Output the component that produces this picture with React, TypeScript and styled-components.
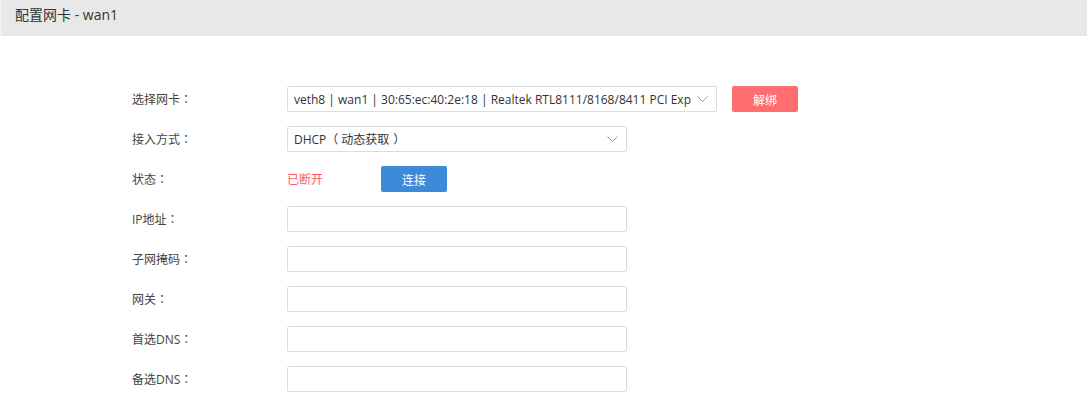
import React from "react";
import styled, { createGlobalStyle } from "styled-components";

const Global = createGlobalStyle`
  html, body { margin: 0; padding: 0; background: #fff; }
  body { font-family: "Open Sans", "Noto Sans CJK SC", sans-serif; color: #333; }
  * { box-sizing: border-box; }
`;

const Header = styled.div`
  height: 36px;
  background: #e8e8e8;
  border-left: 1px solid #f4f4f4;
  padding-left: 14px;
  font-size: 14px;
  line-height: 29px;
  color: #333;
`;

const Form = styled.div`
  margin-top: 43px;
  padding-left: 132px;
  display: flex;
  flex-direction: column;
`;

const Row = styled.div`
  height: 40px;
  display: flex;
  align-items: center;
`;

const Label = styled.div`
  width: 155px;
  font-size: 12px;
  color: #444;
`;

const Punct = styled.span`
  font-family: "Noto Sans CJK TC", sans-serif;
`;

const Paren = styled.span<{ $open?: boolean }>`
  display: inline-block;
  width: 12px;
  margin-left: ${(p) => (p.$open ? "0" : "4px")};
  margin-right: ${(p) => (p.$open ? "3px" : "0")};
  font-family: "Noto Sans CJK TC", sans-serif;
`;

const SelectBox = styled.div<{ $w: number }>`
  width: ${(p) => p.$w}px;
  height: 26px;
  border: 1px solid #dcdcdc;
  border-radius: 2px;
  display: flex;
  align-items: center;
  padding: 0 8px 0 6px;
  font-size: 12px;
  color: #333;
  background: #fff;
  white-space: nowrap;
  overflow: hidden;
`;

const SelectText = styled.span`
  flex: 1;
  overflow: hidden;
`;

const Input = styled.div`
  width: 340px;
  height: 26px;
  border: 1px solid #dcdcdc;
  border-radius: 2px;
  background: #fff;
`;

const Button = styled.button<{ $color: string }>`
  width: 66px;
  height: 26px;
  border: none;
  border-radius: 2px;
  background: ${(p) => p.$color};
  color: #fff;
  font-family: "Noto Sans CJK SC", sans-serif;
  font-size: 12px;
  padding: 0;
  cursor: pointer;
`;

const Status = styled.span`
  width: 94px;
  font-size: 12px;
  color: #ff5a5f;
`;

const Gap = styled.div`
  width: 15px;
`;

const Chevron = () => (
  <svg width="11" height="6" viewBox="0 0 11 6" style={{ flexShrink: 0 }}>
    <path d="M0.5 0.5 L5.5 5.5 L10.5 0.5" fill="none" stroke="#999" strokeWidth="1" />
  </svg>
);

const L = ({ t }: { t: string }) => (
  <Label>
    {t}
    <Punct>：</Punct>
  </Label>
);

export default function App() {
  return (
    <>
      <Global />
      <Header>配置网卡 - wan1</Header>
      <Form>
        <Row>
          <L t="选择网卡" />
          <SelectBox $w={430}>
            <SelectText>veth8 | wan1 | 30:65:ec:40:2e:18 | Realtek RTL8111/8168/8411 PCI Exp</SelectText>
            <Chevron />
          </SelectBox>
          <Gap />
          <Button $color="#ff6d70">解绑</Button>
        </Row>
        <Row>
          <L t="接入方式" />
          <SelectBox $w={340}>
            <SelectText>
              DHCP<Paren $open>（</Paren>动态获取<Paren>）</Paren>
            </SelectText>
            <Chevron />
          </SelectBox>
        </Row>
        <Row>
          <L t="状态" />
          <Status>已断开</Status>
          <Button $color="#3d8bd8">连接</Button>
        </Row>
        <Row>
          <L t="IP地址" />
          <Input />
        </Row>
        <Row>
          <L t="子网掩码" />
          <Input />
        </Row>
        <Row>
          <L t="网关" />
          <Input />
        </Row>
        <Row>
          <L t="首选DNS" />
          <Input />
        </Row>
        <Row>
          <L t="备选DNS" />
          <Input />
        </Row>
      </Form>
    </>
  );
}
